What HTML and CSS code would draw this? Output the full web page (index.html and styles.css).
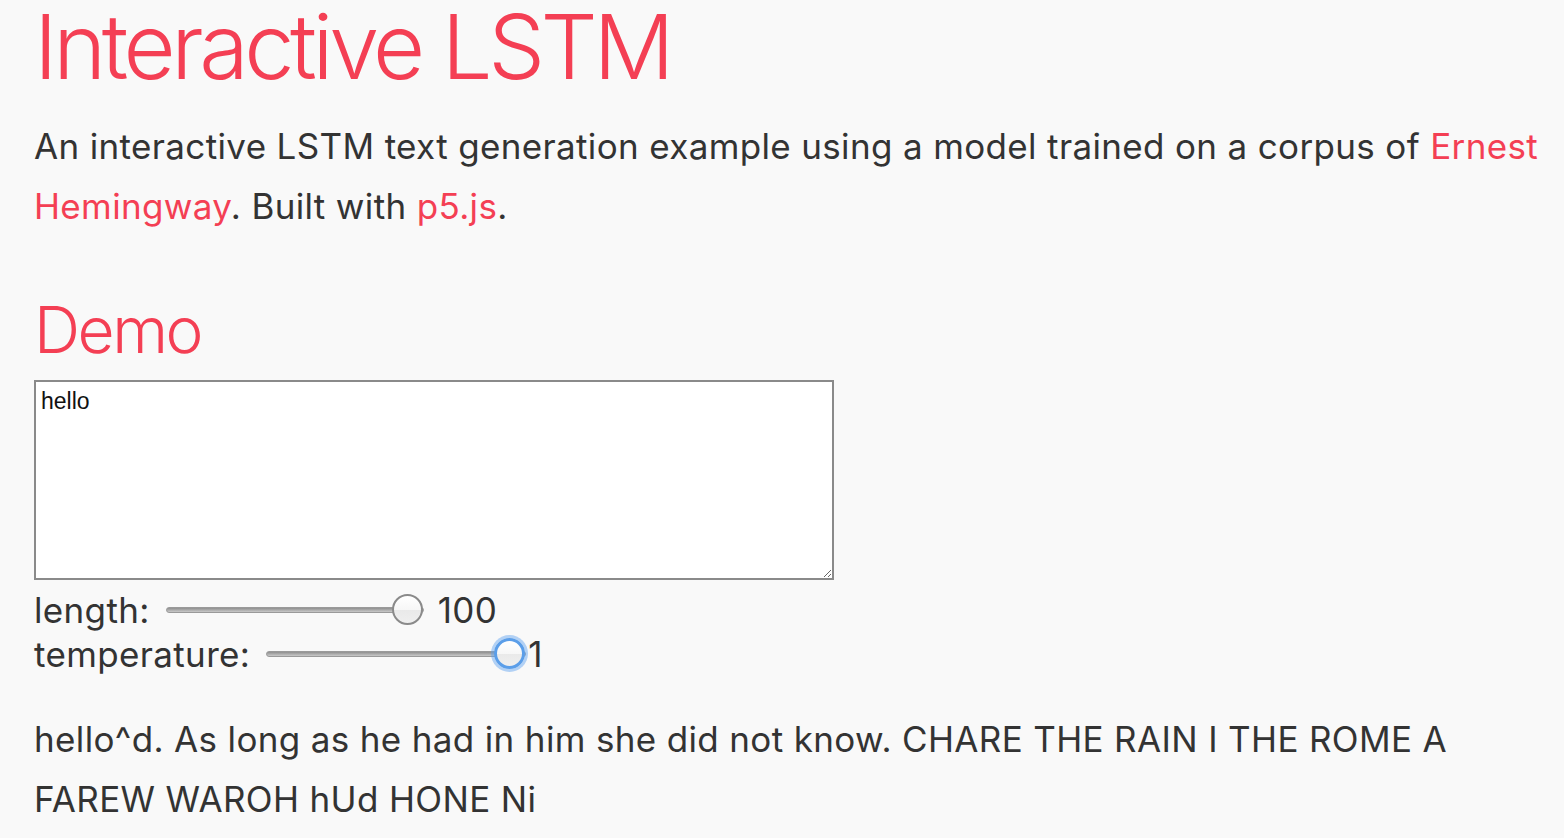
FILE: index.html
```html
<!DOCTYPE html>
<html>
<head>
<meta charset="utf-8">
<link rel="stylesheet" href="styles.css">
</head>
<body>
<main class="page">
  <h1 class="title">Interactive LSTM</h1>
  <p class="intro">An interactive LSTM text generation example using a model trained on a corpus of <a class="link" href="#">Ernest Hemingway</a>. Built with <a class="link" href="#">p5.js</a>.</p>
  <h2 class="section">Demo</h2>
  <textarea class="seed">hello</textarea>
  <div class="controls">
    <div class="row"><span class="label">length:</span><input class="slider" type="range" min="1" max="100" value="100"><span class="value">100</span></div>
    <div class="row"><span class="label">temperature:</span><input class="slider slider-focus slider-temp" type="range" min="0" max="1" step="0.01" value="1"><span class="value value-tight">1</span></div>
  </div>
  <p class="output">hello^d. As long as he had in him she did not know. CHARE THE RAIN I THE ROME A FAREW WAROH hUd HONE Ni</p>
</main>
</body>
</html>
```
FILE: styles.css
```css
html, body {
  margin: 0;
  padding: 0;
  background: #f9f9f9;
}
.page {
  padding: 0 14px 0 34px;
  font-family: Inter, "Noto Sans", sans-serif;
  color: #333;
}
.title {
  margin: -3px 0 0;
  font-size: 90px;
  font-weight: 300;
  line-height: 100px;
  color: #f43f54;
  letter-spacing: -4.4px;
}
.intro, .output {
  margin: 0;
  font-size: 35px;
  line-height: 60px;
  letter-spacing: 0.35px;
}
.intro { margin-top: 19px; }
.link {
  color: #f43f54;
  text-decoration: none;
}
.section {
  margin: 54px 0 0;
  font-size: 64px;
  font-weight: 300;
  line-height: 80px;
  color: #f43f54;
  letter-spacing: -2.5px;
}
.seed {
  display: block;
  box-sizing: border-box;
  width: 800px;
  height: 200px;
  margin: 10px 0 0;
  padding: 6px 5px;
  border: 2px solid #8a8a8a;
  background: #fff;
  font-family: "Liberation Sans", Arial, sans-serif;
  font-size: 23px;
  color: #111;
  resize: both;
}
.controls {
  display: flex;
  flex-direction: column;
  margin-top: 8px;
}
.row {
  display: flex;
  align-items: center;
  height: 44px;
  font-size: 35px;
  letter-spacing: 0.35px;
}
.label { margin-right: 16px; }
.value { margin-left: 14px; }
.value-tight { margin-left: 2px; }
.slider {
  -webkit-appearance: none;
  appearance: none;
  width: 258px;
  height: 34px;
  margin: 0;
  background: transparent;
}
.slider::-webkit-slider-runnable-track {
  height: 6px;
  border-radius: 4px;
  border: 1px solid #9a9a9a;
  background: linear-gradient(#8f8f8f, #c9c9c9);
}
.slider::-webkit-slider-thumb {
  -webkit-appearance: none;
  width: 31px;
  height: 31px;
  margin-top: -14px;
  border-radius: 50%;
  border: 2px solid #8a8a8a;
  box-sizing: border-box;
  background: linear-gradient(#ffffff 0%, #f7f7f7 50%, #e9e9e9 51%, #efefef 100%);
}
.slider-temp { width: 260px; }
.slider-focus::-webkit-slider-thumb {
  border: 3px solid #5b9ee9;
  box-shadow: 0 0 0 3px rgba(90, 160, 240, 0.45);
}
.output { margin-top: 33px; }
```
